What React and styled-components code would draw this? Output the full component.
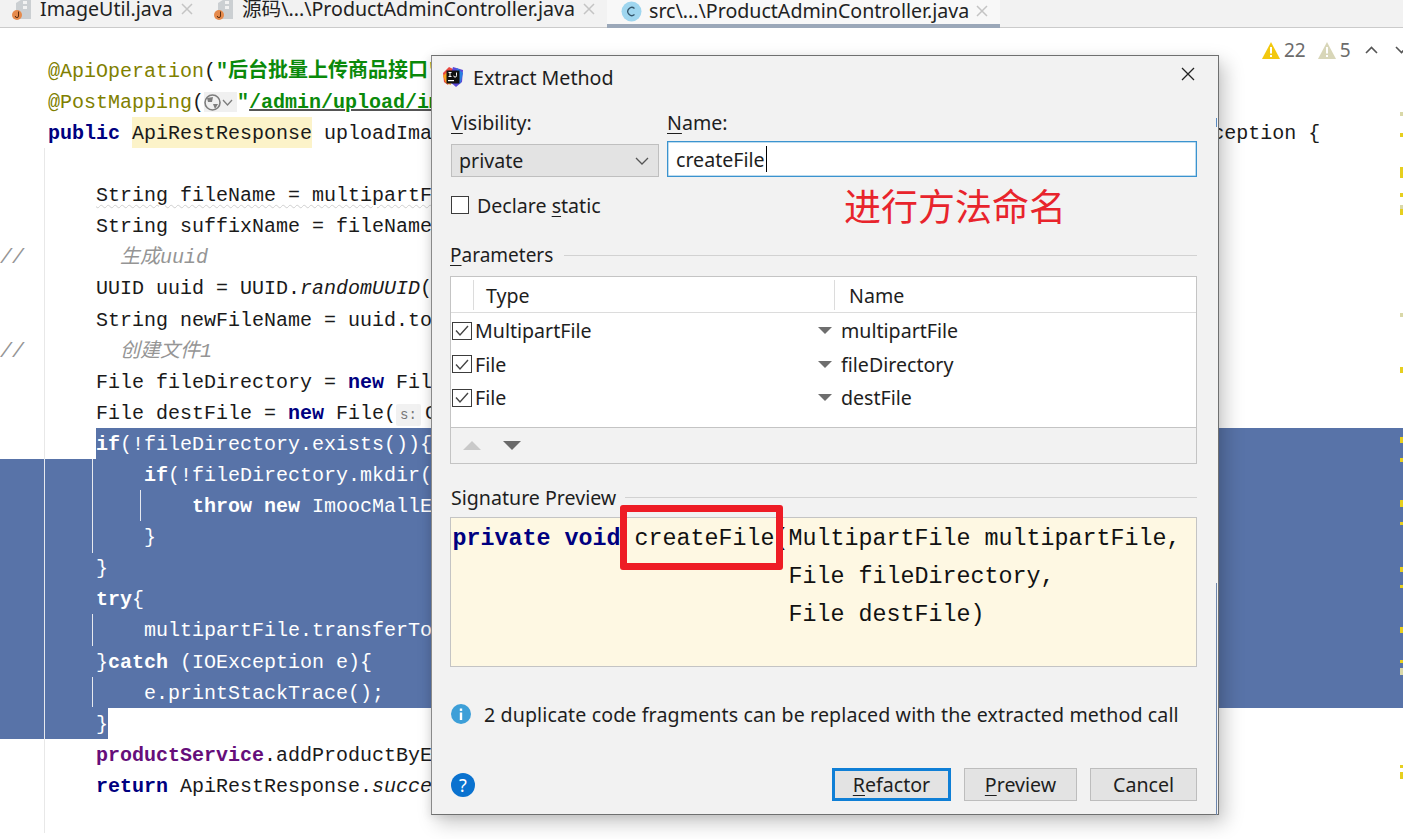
import React from "react";
import styled, { createGlobalStyle } from "styled-components";

const UI = `"Noto Sans", "Noto Sans CJK SC", sans-serif`;
const MONO = `"Liberation Mono", "Noto Sans CJK SC", monospace`;
const SEL = "#5873a8";

const Global = createGlobalStyle`
  html, body { margin: 0; padding: 0; background: #fff; }
  body { width: 1403px; height: 839px; overflow: hidden; font-family: ${UI}; }
`;

const Page = styled.div`position: relative; width: 1403px; height: 839px; overflow: hidden; background: #fff;`;

/* tabs */
const TabBar = styled.div`display: flex; height: 28px; box-sizing: border-box; background: #f2f2f2; border-bottom: 1px solid #cbcbcb; padding-left: 12px;`;
const Tab = styled.div`
  display: flex; align-items: center; gap: 8px; height: 28px; box-sizing: border-box; margin-top: -5px;
  width: ${p => p.$w}px; font-size: 19.6px; color: #222; white-space: nowrap; overflow: hidden;
`;
const ActiveTab = styled(Tab)`
  margin-top: 0; height: 28px; padding: 0 0 2px 14px; gap: 7px; background: #f8f8f8; border-bottom: 4px solid #9ba8b9;
`;
const TabLabel = styled.span`line-height: 24px;`;
const TabClose = styled.svg`width: 12px; height: 12px; flex: none;`;

/* editor */
const Editor = styled.div`
  padding-top: 26.8px;
  font: 20px/34.6px ${MONO}; color: #1a1a1a; white-space: pre;
`;
const Line = styled.div`height: 31.1px; background: ${p => (p.$sel ? SEL : "transparent")}; color: ${p => (p.$sel ? "#fff" : "inherit")};`;
const SplitLine = styled.div`display: flex; height: 31.1px;`;
const Indent = styled.div`width: 96px; flex: none;`;
const SelFill = styled.div`flex: 1; height: 31.1px; background: ${SEL}; color: #fff;`;
const SelEnd = styled.div`width: 108px; height: 31.1px; background: ${SEL}; color: #fff;`;
const Kw = styled.b`color: ${p => (p.$white ? "#fff" : "#000080")}; font-weight: 700;`;
const Ann = styled.span`color: #808000;`;
const Str = styled.b`color: #0a8a0a; font-weight: 700;`;
const Link = styled(Str)`text-decoration: underline; text-decoration-color: #555;`;
const Comment = styled.i`color: #959595;`;
const Field = styled.b`color: #660e7a;`;
const Ital = styled.i``;
const TypeHi = styled.span`background: #fcf3c9; display: inline-block; height: 31.1px; vertical-align: top;`;
const Hint = styled.span`font: 14px ${MONO}; color: #777; background: #f1f1f1; padding: 3px 4px; margin-right: 4px; border-radius: 2px;`;
const GlobeBox = styled.span`display: inline-flex; align-items: center; gap: 1px; background: #f0f0f0; vertical-align: -3px; width: 33px; height: 20px;`;
const Wavy = styled.span`text-decoration: underline wavy #cfcfcf 1px; text-underline-offset: 3px;`;
const Guide = styled.div`
  position: absolute; left: ${p => p.$x}px; top: ${p => p.$top}px; height: ${p => p.$h}px; width: 1px;
  background: ${p => (p.$light ? "#e6e9ef" : "#e8e8e8")};
`;
const Mark = styled.div`
  position: absolute; right: 0; top: ${p => p.$top}px; height: ${p => p.$h}px; width: 3px;
  background: ${p => (p.$pale ? "#d9d8a8" : "#e6cf1f")};
`;

/* top right inspection widget */
const Widget = styled.div`
  position: absolute; top: 38px; left: 1262px; display: flex; align-items: center;
  font-size: 19px; color: #6b6b6b; height: 24px;
`;
const Count = styled.span`margin: 0 ${p => p.$r}px 0 4px;`;
const Chevron = styled.svg`flex: none; margin-right: 17px;`;

/* dialog */
const Dialog = styled.div`
  position: absolute; left: 431px; top: 55px; width: 788px; height: 760px; box-sizing: border-box;
  background: #f2f2f2; border: 1px solid #6f7070; border-left-color: #8a8a8a;
  box-shadow: 6px 8px 18px rgba(0,0,0,.22), -2px 2px 8px rgba(0,0,0,.08);
  padding: 0 21px 13px 19px; display: flex; flex-direction: column; font-size: 19.6px; color: #1e1e1e;
`;
const TitleBar = styled.div`display: flex; align-items: center; height: 42px; margin: 0 -1px 0 -8px; padding-right: 3px;`;
const Title = styled.div`margin-left: 10px; flex: 1;`;
const CloseIcon = styled.svg`position: relative; top: -3px; flex: none;`;
const Labels = styled.div`display: grid; grid-template-columns: 208px 1fr; column-gap: 8px; margin-top: 7px; height: 34px; align-items: center;`;
const Und = styled.span`text-decoration: underline; text-underline-offset: 3px; text-decoration-thickness: 1px;`;
const Fields = styled.div`display: grid; grid-template-columns: 208px 1fr; column-gap: 8px; height: 36px; margin-top: 2px;`;
const Combo = styled.div`
  align-self: end; height: 33px; box-sizing: border-box; background: #e3e3e3; border: 1px solid #bfbfbf;
  display: flex; align-items: center; justify-content: space-between; padding: 0 9px 0 7px;
`;
const TextInput = styled.div`
  background: #fff; border: 1px solid #3b93cf; box-shadow: inset 0 0 0 .5px #7db9e0; display: flex; align-items: center; padding-left: 8px;
`;
const Caret = styled.span`display: inline-block; width: 1px; height: 26px; background: #000; margin-left: 1px;`;
const CheckRow = styled.div`display: flex; align-items: center; height: 28px; margin-top: 14px; gap: 8px;`;
const Box = styled.div`width: 18px; height: 18px; box-sizing: border-box; border: 1px solid #3c3c3c; background: #fff; flex: none;`;
const CheckBox = styled(Box)`width: 20px; display: flex; align-items: center; justify-content: center;`;
const Section = styled.div`display: flex; align-items: center; gap: ${p => p.$gap}px; height: 30px; white-space: nowrap; margin-top: ${p => p.$mt}px;`;
const ParamTitle = styled.span`font-size: 19px; margin-left: -1px;`;
const Rule = styled.div`flex: 1; height: 1px; background: #d2d2d2;`;
const Table = styled.div`margin: 6px 0 0 -1px; height: 188px; box-sizing: border-box; background: #fff; border: 1px solid #c4c4c4; display: flex; flex-direction: column;`;
const THead = styled.div`display: grid; grid-template-columns: 22px 361px 1fr; height: 36px; box-sizing: border-box; border-bottom: 1px solid #dcdcdc; flex: none;`;
const TH = styled.div`display: flex; align-items: center; padding-left: ${p => p.$pad}px; border-left: ${p => (p.$line ? "1px solid #dcdcdc" : "none")}; margin: 3px 0 2px;`;
const Rows = styled.div`flex: 1; padding-top: 1px;`;
const Row = styled.div`display: grid; grid-template-columns: 366px 1fr; height: 33.5px; align-items: center; padding-left: 1px;`;
const RowType = styled.div`display: flex; align-items: center; gap: 3px;`;
const RowName = styled.div`display: flex; align-items: center; gap: 9px;`;
const Toolbar = styled.div`height: 36px; flex: none; box-sizing: border-box; background: #f2f2f2; border-top: 1px solid #c4c4c4; display: flex; align-items: center; gap: 22px; padding-left: 12px;`;
const SigBox = styled.div`
  margin: 5px 0 0 -1px; height: 150px; box-sizing: border-box; background: #fef8e3; border: 1px solid #c4c4c4;
  padding: 2px 0 0 1.5px; font: 23.33px/38px ${MONO}; color: #111; white-space: pre;
`;
const Info = styled.div`display: flex; align-items: center; gap: 13px; margin-top: 32px; height: 30px; letter-spacing: .12px;`;
const Footer = styled.div`display: flex; align-items: center; margin-top: auto; height: 33px;`;
const Btn = styled.div`
  width: ${p => p.$w}px; height: 33px; box-sizing: border-box; margin-left: 13px; background: #e3e3e3;
  border: ${p => (p.$primary ? "3px solid #0f7fd6" : "1px solid #bdbdbd")};
  display: flex; align-items: center; justify-content: center;
`;
const Help = styled.div`
  width: 24px; height: 24px; border-radius: 50%; background: #0a72cf; color: #fff; display: flex;
  align-items: center; justify-content: center; font-size: 18px; margin-right: auto;
`;
const Note = styled.div`position: absolute; left: 412px; top: 125px; font: 37px/48px "Noto Sans CJK SC", sans-serif; color: #e8242c; white-space: nowrap;`;
const RedRect = styled.div`position: absolute; left: 188px; top: 449px; width: 163px; height: 65px; box-sizing: border-box; border: 7px solid #ee1c25; border-radius: 3px;`;
const EdgeLine = styled.div`position: absolute; right: 1px; top: ${p => p.$top}px; height: ${p => p.$h}px; width: 1px; background: ${p => p.$c};`;

const X = () => (
  <TabClose viewBox="0 0 12 12">
    <path d="M1 1 11 11M11 1 1 11" stroke="#c4c4c4" strokeWidth="1.5" fill="none" />
  </TabClose>
);

const JavaFile = () => (
  <svg width="20" height="23" viewBox="0 0 20 23" style={{ flex: "none" }}>
    <path d="M4 5 12 0 19 0V21H4Z" fill="#cbcfd2" />
    <path d="M11 3h4v3h-4z M11 8h4v3h-4z" fill="#f2f2f2" />
    <circle cx="5" cy="17" r="5" fill="#e58a4c" />
    <path d="M6.5 13.5V18a1.6 1.6 0 0 1-3.2 0" stroke="#5b2d10" strokeWidth="1" fill="none" />
  </svg>
);

const ClassIcon = () => (
  <svg width="21" height="21" viewBox="0 0 21 21" style={{ flex: "none" }}>
    <circle cx="10.5" cy="10.5" r="10" fill="#9fd6ef" />
    <path d="M13.5 7.5a4 4 0 1 0 0 6" stroke="#35566b" strokeWidth="1.3" fill="none" />
  </svg>
);

const Warn = ({ c }) => (
  <svg width="18" height="17" viewBox="0 0 18 17">
    <path d="M9 0 18 17H0Z" fill={c} />
    <rect x="8" y="5" width="2" height="6.5" fill="#fff" />
    <rect x="8" y="13" width="2" height="2" fill="#fff" />
  </svg>
);

const Logo = () => (
  <svg width="20" height="20" viewBox="0 0 20 20" style={{ flex: "none" }}>
    <path d="M0 6 6 0 12 3 5 18 1 15Z" fill="#e8473f" />
    <path d="M10 0 20 3 19 15 13 20 6 14Z" fill="#5a49d6" />
    <path d="M0 9 5 4 8 18 3 16Z" fill="#f7a01c" />
    <path d="M14 1 20 6 17 17 12 12Z" fill="#2a7fe0" />
    <rect x="3.5" y="3.5" width="13" height="13" fill="#111" />
    <path d="M5.5 5.5h3M7 5.5v4M5.5 9.5h3M13.5 5.5v3.2a1.3 1.3 0 0 1-2.8 0" stroke="#fff" strokeWidth="1" fill="none" />
    <rect x="5" y="13" width="6" height="1.2" fill="#fff" />
  </svg>
);

const Check = () => (
  <CheckBox>
    <svg width="16" height="13" viewBox="0 0 16 13"><path d="M2 6.5 6 11 14 2" stroke="#444" strokeWidth="1.4" fill="none" /></svg>
  </CheckBox>
);

const Tri = ({ up, c, w = 14, h = 7 }) => (
  <svg width={w} height={h} viewBox="0 0 14 7" preserveAspectRatio="none"><path d={up ? "M7 0 14 7H0Z" : "M0 0H14L7 7Z"} fill={c} /></svg>
);

const marks = [
  [112, 4, 1], [133, 4], [167, 11], [193, 4], [205, 4, 1], [209, 6], [313, 4, 1], [367, 6],
  [437, 6], [458, 4], [500, 7], [522, 3], [567, 5], [585, 3], [627, 6], [660, 3], [668, 7, 1],
  [765, 3], [772, 7],
];

const guides = [
  [44, 148, 311], [44, 459, 280, 1], [44, 739, 94],
  [92, 459, 94, 1], [140, 490, 31, 1], [92, 614, 32, 1], [92, 677, 30, 1],
];

export default function App() {
  return (
    <Page>
      <Global />
      <TabBar>
        <Tab $w={202}><JavaFile /><TabLabel>ImageUtil.java</TabLabel><X /></Tab>
        <Tab $w={393}><JavaFile /><TabLabel>源码\...\ProductAdminController.java</TabLabel><X /></Tab>
        <ActiveTab $w={393}><ClassIcon /><TabLabel>src\...\ProductAdminController.java</TabLabel><X /></ActiveTab>
      </TabBar>
      <Editor>
        <Line>    <Ann>@ApiOperation</Ann>(<Str>"后台批量上传商品接口"</Str>)</Line>
        <Line>    <Ann>@PostMapping</Ann>(<GlobeBox><svg width="17" height="17" viewBox="0 0 17 17"><circle cx="8.5" cy="8.5" r="7.5" fill="none" stroke="#7d7d7d" strokeWidth="1.6"/><path d="M3 4 9 3 8 8 4 8ZM9 10 14 10 11 15Z" fill="#7d7d7d"/></svg><svg width="11" height="7" viewBox="0 0 11 7"><path d="M1 1 5.5 6 10 1" stroke="#7d7d7d" strokeWidth="1.3" fill="none"/></svg></GlobeBox><Str>"</Str><Link>/admin/upload/image</Link><Str>"</Str>)</Line>
        <Line>    <Kw>public</Kw> <TypeHi>ApiRestResponse</TypeHi> uploadImage(@RequestParam("file") MultipartFile multipartFile) throws IOException {"{"}</Line>
        <Line> </Line>
        <Line>        <Wavy>String fileName = multipartFile.getOriginalFilename();</Wavy></Line>
        <Line>        String suffixName = fileName.substring(fileName.lastIndexOf("."));</Line>
        <Line><Comment>//</Comment>        <Comment>生成uuid</Comment></Line>
        <Line>        UUID uuid = UUID.<Ital>randomUUID</Ital>();</Line>
        <Line>        String newFileName = uuid.toString() + suffixName;</Line>
        <Line><Comment>//</Comment>        <Comment>创建文件1</Comment></Line>
        <Line>        File fileDirectory = <Kw>new</Kw> File(Constant.FILE_UPLOAD_DIR);</Line>
        <Line>        File destFile = <Kw>new</Kw> File(<Hint>s:</Hint>Constant.FILE_UPLOAD_DIR + newFileName);</Line>
        <SplitLine><Indent /><SelFill><Kw $white>if</Kw>(!fileDirectory.exists()){"{"}</SelFill></SplitLine>
        <Line $sel>            <Kw $white>if</Kw>(!fileDirectory.mkdir()){"{"}</Line>
        <Line $sel>                <Kw $white>throw new</Kw> ImoocMallException();</Line>
        <Line $sel>            {"}"}</Line>
        <Line $sel>        {"}"}</Line>
        <Line $sel>        <Kw $white>try</Kw>{"{"}</Line>
        <Line $sel>            multipartFile.transferTo(destFile);</Line>
        <Line $sel>        {"}"}<Kw $white>catch</Kw> (IOException e){"{"}</Line>
        <Line $sel>            e.printStackTrace();</Line>
        <Line><SelEnd>        {"}"}</SelEnd></Line>
        <Line>        <Field>productService</Field>.addProductByExcel(destFile);</Line>
        <Line>        <Kw>return</Kw> ApiRestResponse.<Ital>success</Ital>();</Line>
      </Editor>
      {guides.map(([x, t, h, l], i) => <Guide key={i} $x={x} $top={t} $h={h} $light={l} />)}
      {marks.map(([t, h, p], i) => <Mark key={i} $top={t} $h={h} $pale={p} />)}
      <Widget>
        <Warn c="#f2c80f" /><Count $r={12}>22</Count>
        <Warn c="#d8d6b8" /><Count $r={14}>5</Count>
        <Chevron width="13" height="8" viewBox="0 0 13 8"><path d="M1 7 6.5 1.5 12 7" stroke="#555" strokeWidth="1.6" fill="none" /></Chevron>
        <Chevron width="13" height="8" viewBox="0 0 13 8"><path d="M1 1 6.5 6.5 12 1" stroke="#555" strokeWidth="1.6" fill="none" /></Chevron>
      </Widget>
      <Dialog>
        <TitleBar>
          <Logo /><Title>Extract Method</Title>
          <CloseIcon width="14" height="14" viewBox="0 0 14 14"><path d="M1 1 13 13M13 1 1 13" stroke="#222" strokeWidth="1.3" fill="none" /></CloseIcon>
        </TitleBar>
        <Labels><div><Und>V</Und>isibility:</div><div><Und>N</Und>ame:</div></Labels>
        <Fields>
          <Combo>private<svg width="14" height="8" viewBox="0 0 14 8"><path d="M1 1 7 7 13 1" stroke="#555" strokeWidth="1.3" fill="none" /></svg></Combo>
          <TextInput>createFile<Caret /></TextInput>
        </Fields>
        <CheckRow><Box /><span>Declare <Und>s</Und>tatic</span></CheckRow>
        <Section $mt={21} $gap={11}>
          <ParamTitle><Und>P</Und>arameters</ParamTitle><Rule />
        </Section>
        <Table>
          <THead><TH /><TH $line $pad={12}>Type</TH><TH $line $pad={14}>Name</TH></THead>
          <Rows>
            {[["MultipartFile", "multipartFile"], ["File", "fileDirectory"], ["File", "destFile"]].map(([t, n]) => (
              <Row key={n}>
                <RowType><Check />{t}</RowType>
                <RowName><Tri c="#6e6e6e" />{n}</RowName>
              </Row>
            ))}
          </Rows>
          <Toolbar><Tri up c="#c9c9c9" w={18} h={9} /><Tri c="#6a6a6a" w={18} h={9} /></Toolbar>
        </Table>
        <Section $mt={18} $gap={9}>Signature Preview<Rule /></Section>
        <SigBox><Kw>private void</Kw> createFile(MultipartFile multipartFile,{"\n"}{" ".repeat(24)}File fileDirectory,{"\n"}{" ".repeat(24)}File destFile)</SigBox>
        <Info>
          <svg width="20" height="20" viewBox="0 0 20 20" style={{ flex: "none" }}><circle cx="10" cy="10" r="10" fill="#3d9fd8" /><rect x="8.8" y="8.5" width="2.4" height="7.5" fill="#fff" /><rect x="8.8" y="4.5" width="2.4" height="2.4" fill="#fff" /></svg>
          <span>2 duplicate code fragments can be replaced with the extracted method call</span>
        </Info>
        <Footer>
          <Help>?</Help>
          <Btn $primary $w={119}><span><Und>R</Und>efactor</span></Btn>
          <Btn $w={113}><span><Und>P</Und>review</span></Btn>
          <Btn $w={107}>Cancel</Btn>
        </Footer>
        <Note>进行方法命名</Note>
        <RedRect />
        <EdgeLine $top={62} $h={9} $c="#5a8ac0" />
        <EdgeLine $top={527} $h={232} $c="#6d86ad" />
      </Dialog>
    </Page>
  );
}
